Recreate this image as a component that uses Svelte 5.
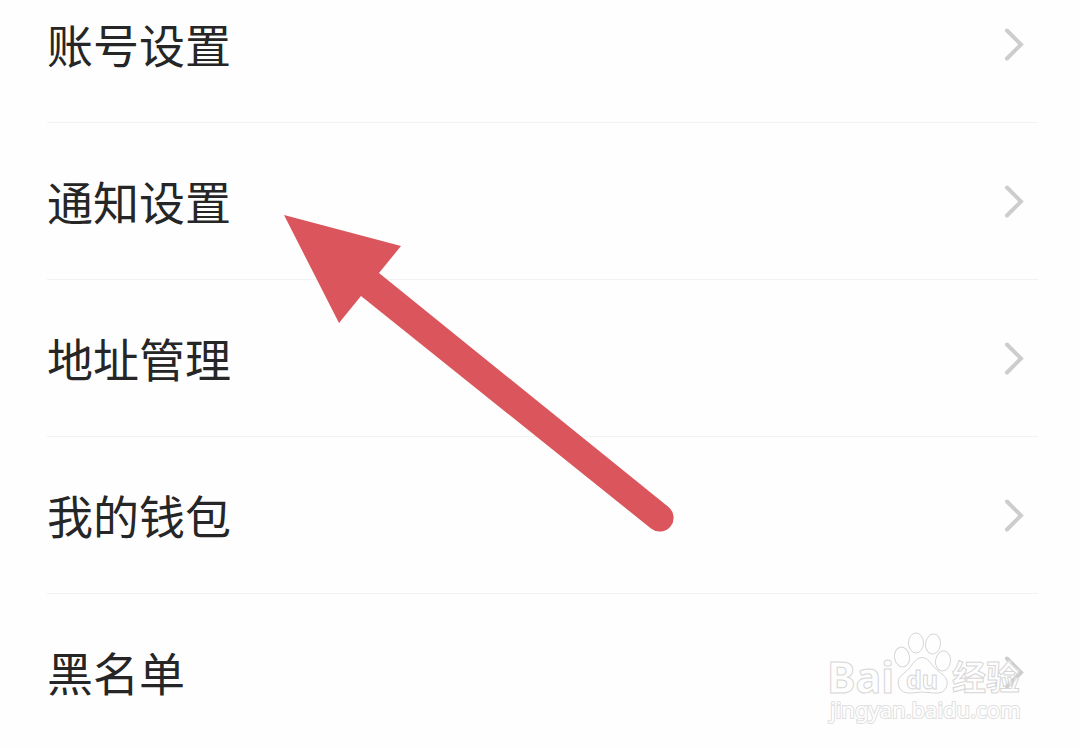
<script>
  const items = ['账号设置', '通知设置', '地址管理', '我的钱包', '黑名单'];
</script>

<main class="screen">
  <nav aria-label="设置">
    <ul class="list">
      {#each items as item}
        <li>
          <button class="row" type="button">
            <span class="label">{item}</span>
            <svg class="chevron" viewBox="0 0 24 36" aria-hidden="true">
              <path d="M5 4.5 L19 18.5 L5 32.5" />
            </svg>
          </button>
        </li>
      {/each}
    </ul>
  </nav>

  <svg class="arrow" viewBox="0 0 392 320" aria-hidden="true">
    <path d="M0 0 L117 31 L95 58 L384.5 292 A13.7 13.7 0 0 1 367 313.5 L77 81 L55 108 Z" />
  </svg>

  <svg class="watermark" viewBox="0 0 200 100" role="img" aria-label="Baidu 经验">
    <g class="outline">
      <text class="latin" x="4" y="65" font-size="43">Bai</text>
      <ellipse cx="79" cy="29" rx="7.5" ry="10" transform="rotate(-10 79 29)" />
      <ellipse cx="93" cy="15" rx="7.5" ry="10" />
      <ellipse cx="110" cy="16" rx="7.5" ry="10" transform="rotate(8 110 16)" />
      <ellipse cx="120" cy="33" rx="7.5" ry="10" transform="rotate(8 120 33)" />
      <path d="M88 38 Q99 21 110 38 Q113 42 119 46 Q127 52 123 60 Q120 66 111 65 Q99 63 89 65 Q79 66 76 59 Q73 51 80 46 Q85 42 88 38 Z" />
      <text class="latin" x="83" y="61" font-size="25">du</text>
      <text class="chinese" x="129" y="62" font-size="34">经验</text>
      <text class="url" x="7" y="90" font-size="22">jingyan.baidu.com</text>
    </g>
  </svg>
</main>

<style>
  :global(body) {
    margin: 0;
    background: #fefefe;
  }

  .screen {
    position: relative;
    overflow: hidden;
    font-family: "Noto Sans CJK SC", sans-serif;
    color: #262626;
  }

  .list {
    list-style: none;
    margin: -34px 42px 0 47px;
    padding: 0;
  }

  li {
    border-bottom: 1px solid #f2f2f2;
  }

  li:last-child {
    border-bottom: 0;
  }

  .row {
    display: flex;
    align-items: center;
    justify-content: space-between;
    width: 100%;
    padding: 44px 12px 44px 0;
    border: 0;
    background: none;
    color: inherit;
    font: inherit;
    font-size: 46px;
    line-height: 66px;
    text-align: left;
    cursor: pointer;
  }

  .label {
    padding-bottom: 2px;
  }

  li:last-child .row {
    padding-bottom: 42px;
  }

  .chevron {
    width: 24px;
    height: 36px;
    fill: none;
    stroke: #cdcdcd;
    stroke-width: 4;
    stroke-linecap: round;
  }

  .arrow {
    position: absolute;
    left: 284px;
    top: 215px;
    width: 392px;
    height: 320px;
    fill: #da565c;
    pointer-events: none;
  }

  .watermark {
    position: absolute;
    right: 57px;
    bottom: 20px;
    width: 200px;
    height: 100px;
    overflow: visible;
    pointer-events: none;
  }

  .outline {
    fill: #fefefe;
    fill-opacity: 0.6;
    stroke: #d6d6d6;
    stroke-width: 1;
  }

  .latin {
    font-family: "Noto Sans", sans-serif;
    font-weight: 700;
  }

  .chinese {
    font-family: "Noto Sans CJK SC", sans-serif;
    font-weight: 700;
  }

  .url {
    font-family: "Noto Sans", sans-serif;
    stroke: #e0e0e0;
    paint-order: stroke;
    stroke-width: 2;
    fill-opacity: 1;
  }
</style>
